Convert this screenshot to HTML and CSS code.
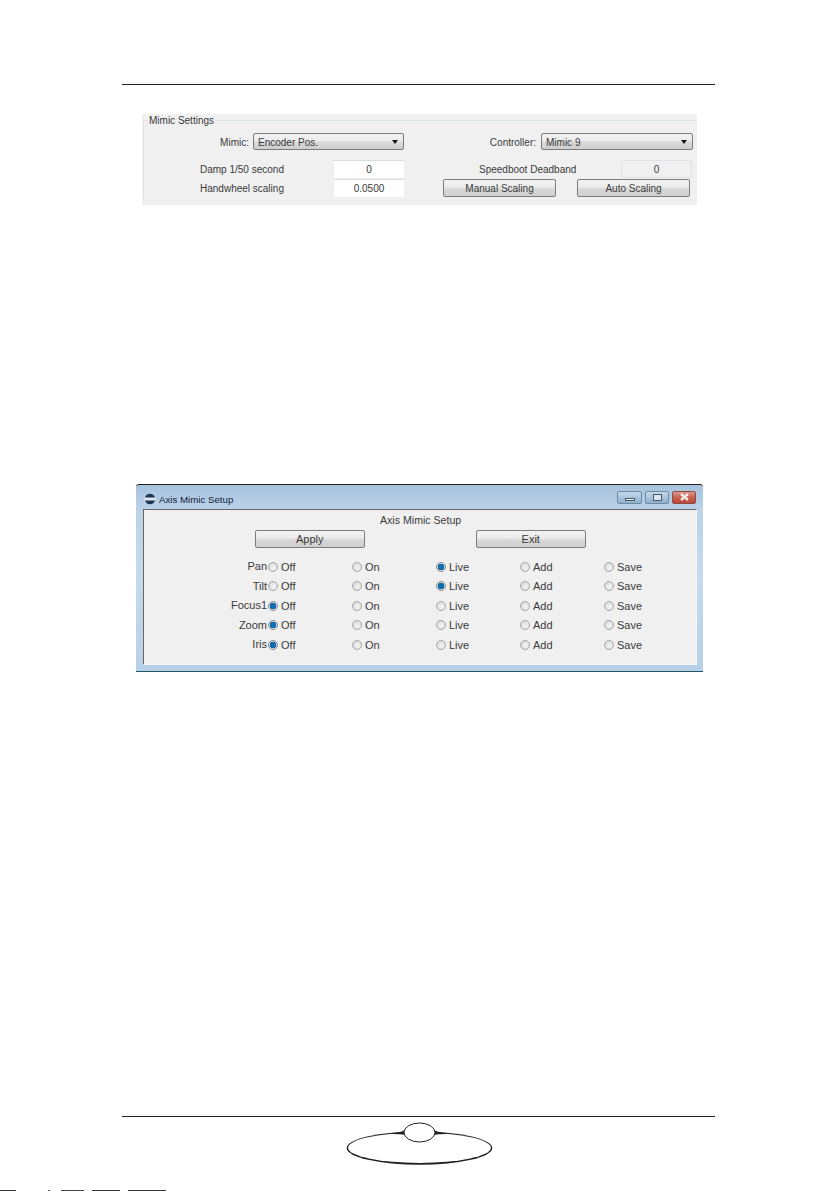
FILE: index.html
```html
<!DOCTYPE html>
<html lang="en">
<head>
<meta charset="utf-8">
<title>Axis Mimic Setup</title>
<link rel="stylesheet" href="styles.css">
</head>
<body>
<div class="page">
  <hr class="rule rule-top">

  <section class="panel">
    <div class="group">
      <span class="legend">Mimic Settings</span>
      <div class="row row-1">
        <span class="lbl lbl-mimic">Mimic:</span>
        <div class="select sel-mimic"><span>Encoder Pos.</span><i class="arrow"></i></div>
        <span class="lbl lbl-ctrl">Controller:</span>
        <div class="select sel-ctrl"><span>Mimic 9</span><i class="arrow"></i></div>
      </div>
      <div class="row row-2">
        <span class="txt txt-damp">Damp 1/50 second</span>
        <div class="field">0</div>
        <span class="txt txt-speed">Speedboot Deadband</span>
        <div class="field field-off">0</div>
      </div>
      <div class="row row-3">
        <span class="txt txt-damp">Handwheel scaling</span>
        <div class="field field-2">0.0500</div>
        <button class="btn btn-manual" type="button">Manual Scaling</button>
        <button class="btn btn-auto" type="button">Auto Scaling</button>
      </div>
    </div>
  </section>

  <section class="window">
    <header class="titlebar">
      <svg class="appicon" width="12" height="12" viewBox="0 0 12 12">
        <circle cx="6" cy="6" r="5.2" fill="#1d3350"/>
        <rect x="0" y="4.6" width="12" height="2.8" rx="1" fill="#dfe6ee"/>
      </svg>
      <span class="wintitle">Axis Mimic Setup</span>
      <div class="wincontrols">
        <div class="wc wc-min"><i></i></div>
        <div class="wc wc-max"><i></i></div>
        <div class="wc wc-close">
          <svg width="11" height="8" viewBox="0 0 11 8"><path d="M2 1 9 7M9 1 2 7" stroke="#f4ecea" stroke-width="2.4" fill="none"/></svg>
        </div>
      </div>
    </header>
    <div class="client">
      <div class="client-title">Axis Mimic Setup</div>
      <div class="actions">
        <button class="btn btn-wide" type="button">Apply</button>
        <button class="btn btn-wide" type="button">Exit</button>
      </div>
      <div class="axes">
        <span class="axis">Pan</span>
        <label class="opt"><input class="radio" type="radio" name="pan">Off</label>
        <label class="opt"><input class="radio" type="radio" name="pan">On</label>
        <label class="opt"><input class="radio" type="radio" name="pan" checked>Live</label>
        <label class="opt"><input class="radio" type="radio" name="pan">Add</label>
        <label class="opt"><input class="radio" type="radio" name="pan">Save</label>

        <span class="axis">Tilt</span>
        <label class="opt"><input class="radio" type="radio" name="tilt">Off</label>
        <label class="opt"><input class="radio" type="radio" name="tilt">On</label>
        <label class="opt"><input class="radio" type="radio" name="tilt" checked>Live</label>
        <label class="opt"><input class="radio" type="radio" name="tilt">Add</label>
        <label class="opt"><input class="radio" type="radio" name="tilt">Save</label>

        <span class="axis">Focus1</span>
        <label class="opt"><input class="radio" type="radio" name="focus" checked>Off</label>
        <label class="opt"><input class="radio" type="radio" name="focus">On</label>
        <label class="opt"><input class="radio" type="radio" name="focus">Live</label>
        <label class="opt"><input class="radio" type="radio" name="focus">Add</label>
        <label class="opt"><input class="radio" type="radio" name="focus">Save</label>

        <span class="axis">Zoom</span>
        <label class="opt"><input class="radio" type="radio" name="zoom" checked>Off</label>
        <label class="opt"><input class="radio" type="radio" name="zoom">On</label>
        <label class="opt"><input class="radio" type="radio" name="zoom">Live</label>
        <label class="opt"><input class="radio" type="radio" name="zoom">Add</label>
        <label class="opt"><input class="radio" type="radio" name="zoom">Save</label>

        <span class="axis">Iris</span>
        <label class="opt"><input class="radio" type="radio" name="iris" checked>Off</label>
        <label class="opt"><input class="radio" type="radio" name="iris">On</label>
        <label class="opt"><input class="radio" type="radio" name="iris">Live</label>
        <label class="opt"><input class="radio" type="radio" name="iris">Add</label>
        <label class="opt"><input class="radio" type="radio" name="iris">Save</label>
      </div>
    </div>
  </section>

  <footer class="foot">
    <hr class="rule">
    <svg class="logo" width="160" height="48" viewBox="0 0 160 48">
      <ellipse cx="79.5" cy="27.1" rx="72.8" ry="16.6" fill="#231f20"/>
      <ellipse cx="79.5" cy="26.7" rx="71.4" ry="15.2" fill="#fff"/>
      <path d="M52 12.2Q60 11.5 64 9.5L67 8.5V14Q60 13 52 13ZM107 12.2Q99 11.5 95 9.5L92 8.5V14Q99 13 107 13Z" fill="#231f20"/>
      <ellipse cx="79.5" cy="11.5" rx="15.5" ry="9.5" fill="#fff" stroke="#231f20" stroke-width="1"/>
    </svg>
    <div class="cut-edge"></div>
  </footer>
</div>
</body>
</html>
```
FILE: styles.css
```css
* { box-sizing: border-box; }
html, body { margin: 0; padding: 0; background: #fff; }
body {
  font-family: "Liberation Sans", Arial, sans-serif;
  font-size: 11px;
  color: #3a3a3a;
}
.page {
  width: 840px;
  height: 1191px;
  overflow: hidden;
  display: flex;
  flex-direction: column;
  padding-top: 84px;
}
.rule {
  display: block;
  width: 593px;
  height: 1px;
  margin: 0 0 0 122px;
  border: 0;
  background: #231f20;
}

/* Mimic settings */
.panel {
  width: 555px;
  height: 91px;
  margin: 29px 0 0 142px;
  padding: 6px 0 0 1px;
  background: #f0f0f0;
  font-size: 10px;
}
.group {
  position: relative;
  height: 81px;
  border: 1px solid #dce5e5;
  border-right: 0;
  border-bottom-color: #f0f0f0;
  border-radius: 2px 0 0 2px;
  padding-top: 12px;
}
.legend {
  position: absolute;
  left: 4px;
  top: -7px;
  padding: 0 1px;
  line-height: 13px;
  background: #f0f0f0;
}
.row { display: flex; align-items: center; }
.row-1 { height: 17px; padding-top: 0; }
.row-2 { height: 18px; margin-top: 10px; }
.row-3 { height: 18px; margin-top: 1px; }

.lbl { text-align: right; white-space: nowrap; padding-top: 1px; }
.lbl-mimic { width: 105px; }
.sel-mimic { width: 151px; margin-left: 4px; }
.lbl-ctrl { width: 132px; }
.sel-ctrl { width: 152px; margin-left: 5px; }

.select {
  display: flex;
  align-items: center;
  justify-content: space-between;
  height: 17px;
  padding: 1px 5px 0 4px;
  border: 1px solid #7c7c7c;
  border-radius: 2px;
  background: linear-gradient(#f2f2f2, #ebebeb 45%, #d8d8d8 55%, #cfcfcf);
}
.arrow {
  width: 0;
  height: 0;
  border-left: 3.5px solid transparent;
  border-right: 3.5px solid transparent;
  border-top: 4px solid #111;
}
.txt { white-space: nowrap; }
.txt-damp { width: 133px; margin-left: 56px; flex: none; }
.txt-speed { width: 142px; margin-left: 75px; flex: none; }
.field {
  flex: none;
  width: 71px;
  height: 18px;
  line-height: 17px;
  text-align: center;
  background: #fff;
  border-top: 1px solid #d9dde0;
  border-left: 1px solid #eceff1;
}
.field-off { background: #f0f0f0; border: 1px solid #dfe4e6; }
.btn {
  flex: none;
  height: 18px;
  padding: 0;
  font: inherit;
  color: inherit;
  border: 1px solid #7c7c7c;
  border-radius: 2px;
  background: linear-gradient(#f2f2f2, #ebebeb 45%, #d8d8d8 55%, #cfcfcf);
}
.btn-manual { width: 113px; margin-left: 39px; }
.btn-auto { width: 113px; margin-left: 21px; }

/* Window */
.window {
  width: 567px;
  height: 188px;
  margin: 279px 0 0 136px;
  padding: 0 6px 0 7px;
  display: flex;
  flex-direction: column;
  border-top: 1px solid #222;
  border-bottom: 1px solid #1f5a68;
  border-radius: 3px 3px 0 0;
  background: linear-gradient(#a7c3dd, #bcd3e8 14%, #c5daed 50%, #b6d1e8);
}
.titlebar {
  flex: none;
  height: 24px;
  display: flex;
  align-items: center;
  padding-top: 4px;
}
.appicon { margin-left: 1px; }
.wintitle {
  margin-left: 3px;
  color: #14213a;
  font-size: 9.7px;
}
.wincontrols {
  display: flex;
  gap: 3px;
  margin-left: auto;
  margin-top: -4px;
  margin-right: 1px;
}
.wc {
  width: 24px;
  height: 13px;
  display: flex;
  align-items: center;
  justify-content: center;
  border: 1px solid #6c8ba6;
  border-radius: 2px;
  background: linear-gradient(#c6d9ea, #a9c4dc 50%, #8fafcb);
}
.wc-min { width: 25px; }
.wc-min i { width: 10px; height: 3px; margin-top: 5px; background: #eef3f8; border: 1px solid #46596c; }
.wc-max i { width: 9px; height: 7px; border: 1.5px solid #46596c; background: #dbe6f0; }
.wc-close {
  border-color: #8b4a44;
  background: linear-gradient(#dc9b8f, #c9604f 50%, #b9483a);
}

.client {
  flex: 1;
  margin-bottom: 6px;
  display: flex;
  flex-direction: column;
  background: #f0f0f0;
  border: 1px solid #f4f6f7;
  border-top: 1px solid #666;
  border-left: 1px solid #666;
}
.client-title {
  height: 20px;
  line-height: 20px;
  padding-left: 236px;
  white-space: nowrap;
  font-size: 10.6px;
}
.actions { display: flex; gap: 111.5px; padding-left: 111px; }
.btn-wide { width: 109.5px; }
.axes {
  display: grid;
  grid-template-columns: 124px repeat(5, 84px);
  grid-auto-rows: 19.5px;
  margin-top: 9px;
}
.axis { text-align: right; line-height: 19.5px; padding-right: 1px; }
.opt { display: flex; align-items: center; white-space: nowrap; }
.radio {
  appearance: none;
  -webkit-appearance: none;
  width: 10px;
  height: 10px;
  margin: 0 3px 0 0;
  flex: none;
  border: 1px solid #a6a6a6;
  border-radius: 50%;
  background: radial-gradient(circle at 60% 60%, #f4f4f4, #d4d4d4);
}
.radio:checked {
  border-color: #7f8a92;
  background: radial-gradient(circle, #0d6fb4 0 2.5px, #14507e 3px, #e4e8ea 3.6px);
}

/* Footer */
.foot { margin-top: auto; display: flex; flex-direction: column; }
.logo { align-self: flex-start; margin: 4px 0 21px 340px; }
.cut-edge {
  height: 1px;
  width: 166px;
  background: linear-gradient(90deg,
    #333 0 16px, transparent 16px 48px, #555 48px 50px, transparent 50px 61px,
    #444 61px 84px, transparent 84px 92px, #333 92px 120px, transparent 120px 128px,
    #333 128px 166px);
}
```
